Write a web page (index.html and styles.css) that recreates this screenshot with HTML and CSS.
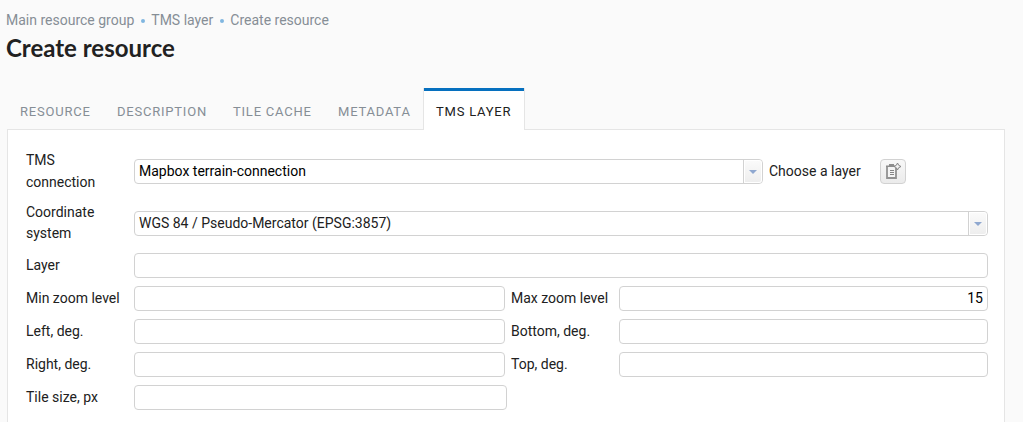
FILE: index.html
```
<!DOCTYPE html>
<html lang="en">
<head>
<meta charset="utf-8">
<title>Create resource</title>
<link rel="stylesheet" href="styles.css">
</head>
<body>
<nav class="breadcrumb"><a>Main resource group</a><i class="dot"></i><a>TMS layer</a><i class="dot"></i><a>Create resource</a></nav>
<h1 class="title">Create resource</h1>
<div class="tabs">
  <div class="tab tab-resource">Resource</div>
  <div class="tab tab-description">Description</div>
  <div class="tab tab-cache">Tile cache</div>
  <div class="tab tab-metadata">Metadata</div>
  <div class="tab active">TMS Layer</div>
</div>
<main class="panel">
  <div class="row connection">
    <label class="label">TMS connection</label>
    <div class="field select"><span class="value dark">Mapbox terrain-connection</span><span class="arrow"><svg width="8" height="4" viewBox="0 0 8 4"><path d="M0 0h8L4 4z" fill="#8fa8d0"/></svg></span></div>
    <label class="label second">Choose a layer</label>
    <button class="pick" aria-label="Choose a layer"><svg width="18" height="17" viewBox="0 0 18 17" fill="none"><path d="M3 3v12h9V5" stroke="#929292" stroke-width="1.800"/><path d="M2 2.500h3V1h5v1.500h1V4H2z" fill="#8d8d8d"/><path d="M4 4.500h7V14H4z" fill="#f4f4f4"/><path d="M6 7.500h4M6 9.500h4M6 11.500h4" stroke="#858585"/><path d="M13.500 0l1.200 2.300L17 3.500l-2.300 1.200L13.500 7l-1.200-2.300L10 3.500l2.300-1.200z" fill="#f2f2f2" stroke="#858585" stroke-width="1"/></svg></button>
  </div>
  <div class="row system">
    <label class="label">Coordinate system</label>
    <div class="field select"><span class="value">WGS 84 / Pseudo-Mercator (EPSG:3857)</span><span class="arrow"><svg width="8" height="4" viewBox="0 0 8 4"><path d="M0 0h8L4 4z" fill="#8fa8d0"/></svg></span></div>
  </div>
  <div class="row"><label class="label">Layer</label><div class="field"></div></div>
  <div class="row pair"><label class="label">Min zoom level</label><div class="field"></div><label class="label second">Max zoom level</label><div class="field number">15</div></div>
  <div class="row pair"><label class="label">Left, deg.</label><div class="field"></div><label class="label second">Bottom, deg.</label><div class="field"></div></div>
  <div class="row pair"><label class="label">Right, deg.</label><div class="field"></div><label class="label second">Top, deg.</label><div class="field"></div></div>
  <div class="row tile"><label class="label">Tile size, px</label><div class="field"></div></div>
</main>
</body>
</html>
```
FILE: styles.css
```
* { box-sizing: border-box; }
html { background: #fafafa; }
body {
  margin: 0;
  height: 422px;
  overflow: hidden;
  display: flex;
  flex-direction: column;
  font: 14px/21.4px Roboto, sans-serif;
  color: #212121;
}
.breadcrumb {
  display: flex;
  align-items: center;
  height: 22px;
  margin: 10px 0 0 6px;
  color: #868e96;
  white-space: nowrap;
}
.dot {
  width: 4px;
  height: 4px;
  margin: 0 6px 0 7px;
  border-radius: 50%;
  background: #80b6e0;
}
.title {
  margin: 2px 0 1px 6px;
  height: 28px;
  font: bold 24px/28px Lato, sans-serif;
}
.tabs {
  display: flex;
  flex: none;
  height: 42px;
  margin: 25px 0 -1px 7px;
  position: relative;
}
.tab {
  padding: 13px 0 0 13px;
  font-size: 13px;
  line-height: 21px;
  letter-spacing: .78px;
  text-transform: uppercase;
  white-space: nowrap;
  color: #868e96;
}
.tab-resource { width: 97px; }
.tab-description { width: 116px; }
.tab-cache { width: 105px; }
.tab-metadata { width: 98px; }
.tab.active {
  width: 102px;
  padding-left: 12px;
  border: solid #e5e5e5;
  border-width: 0 1px;
  box-shadow: inset 0 3px #0670bf;
  background: #fff;
  color: #212121;
}
.panel {
  flex: 1;
  width: 998px;
  margin-left: 7px;
  padding: 15px 16px 0 18px;
  border: 1px solid #e5e5e5;
  border-bottom: 0;
  background: #fff;
}
.row {
  display: grid;
  grid-template-columns: 108px 854px;
  align-items: center;
  height: 33px;
}
.connection { grid-template-columns: 108px 629px 117px 26px; height: 53px; }
.system { height: 51px; }
.system .label { line-height: 21px; padding-bottom: 2px; }
.pair { grid-template-columns: 108px 371px 114px 369px; }
.tile { grid-template-columns: 108px 373px; }
.label { padding-right: 12px; }
.label.second { padding: 0 0 0 6px; }
.field {
  display: flex;
  align-items: center;
  height: 25px;
  border: 1px solid #d2d2d2;
  border-radius: 4px;
  background: #fff;
}
.value { flex: 1; padding-left: 4px; }
.dark, .number { color: #000; }
.number { justify-content: flex-end; padding-right: 4px; }
.arrow {
  display: flex;
  align-items: center;
  justify-content: center;
  width: 18px;
  height: 23px;
  border: 1px solid #fff;
  border-radius: 0 3px 3px 0;
  box-shadow: -1px 0 #d2d2d2;
  background: linear-gradient(#fafafa, #eee);
}
.pick {
  display: flex;
  align-items: center;
  justify-content: center;
  width: 26px;
  height: 25px;
  padding: 0;
  border: 1px solid #d2d2d2;
  border-radius: 4px;
  background: linear-gradient(#f8f8f8, #ebebeb);
}
```
